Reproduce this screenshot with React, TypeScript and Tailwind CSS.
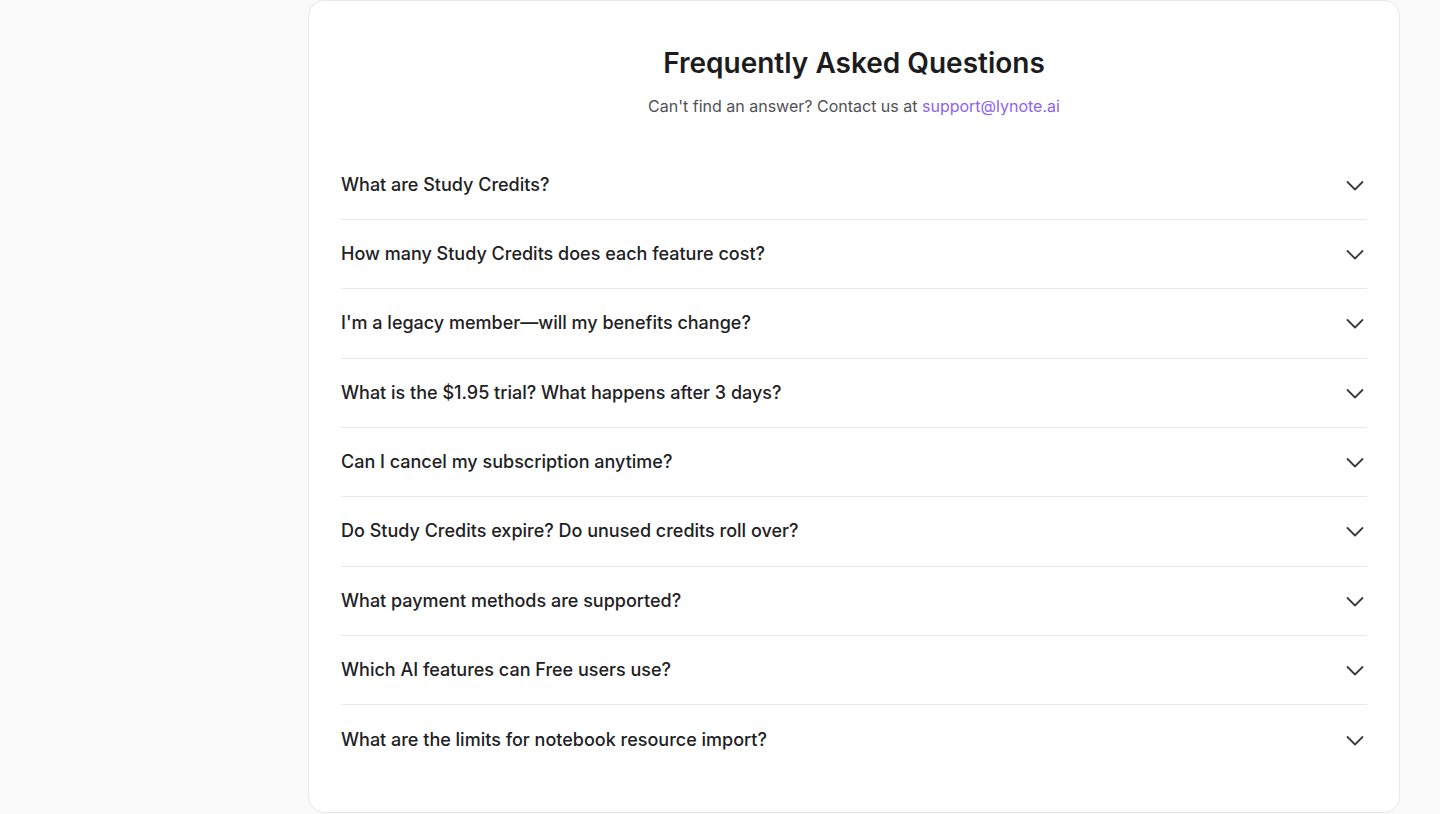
const faqs = [
  'What are Study Credits?',
  'How many Study Credits does each feature cost?',
  "I'm a legacy member\u2014will my benefits change?",
  'What is the $1.95 trial? What happens after 3 days?',
  'Can I cancel my subscription anytime?',
  'Do Study Credits expire? Do unused credits roll over?',
  'What payment methods are supported?',
  'Which AI features can Free users use?',
  'What are the limits for notebook resource import?',
];

function Chevron() {
  return (
    <svg width="24" height="24" viewBox="0 0 24 24" fill="none" className="shrink-0">
      <path
        d="M4.5 9l7.5 7.5 7.5-7.5"
        stroke="#3a3a40"
        strokeWidth="1.8"
        strokeLinecap="round"
        strokeLinejoin="round"
      />
    </svg>
  );
}

export default function App() {
  return (
    <div
      className="min-h-[814px] w-full bg-[#fafafa] overflow-hidden"
      style={{ fontFamily: 'Inter, "Noto Sans", sans-serif' }}
    >
      <div className="ml-[308px] w-[1092px] h-[813px] rounded-2xl border border-[#e7e7ea] bg-white px-8 pt-[44px]">
        {/* Header */}
        <div className="text-center">
          <h2 className="text-[28px] leading-[36px] font-semibold text-[#1c1c1e]">
            Frequently Asked Questions
          </h2>
          <p className="mt-[13px] text-[16px] leading-6 text-[#505057]">
            Can't find an answer? Contact us at{' '}
            <a href="#" className="text-[#8b63f0]">
              support@lynote.ai
            </a>
          </p>
        </div>

        {/* Questions */}
        <div className="mt-[32.67px]">
          {faqs.map((q, i) => (
            <div
              key={q}
              className={`flex h-[69.33px] items-center justify-between ${
                i < faqs.length - 1 ? 'border-b border-[#e8e8eb]' : ''
              }`}
            >
              <span className="text-[18px] leading-6 font-medium text-[#212124]">{q}</span>
              <Chevron />
            </div>
          ))}
        </div>
      </div>
    </div>
  );
}
